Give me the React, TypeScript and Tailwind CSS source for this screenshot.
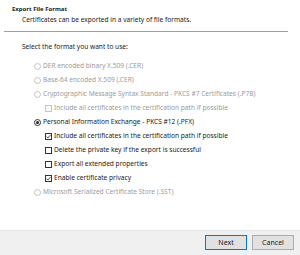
import { ReactNode } from "react";

type OptionProps = {
  label: string
  disabled?: boolean
  checked?: boolean
}

function Radio({ label, disabled, checked }: OptionProps) {
  return (
    <div className="h-[14px] flex items-center pl-[34px]">
      <span
        className={`w-[7px] h-[7px] rounded-full border flex items-center justify-center bg-white ${
          disabled ? "border-[#c4c4c4]" : "border-[#333333]"
        }`}
      >
        {checked && <span className="w-[3px] h-[3px] rounded-full bg-[#222222]" />}
      </span>
      <span className={`ml-[2px] ${disabled ? "text-[#9b9b9b]" : "text-[#1a1a1a]"}`}>{label}</span>
    </div>
  )
}

function Check({ label, disabled, checked }: OptionProps) {
  return (
    <div className="h-[14px] flex items-center pl-[45px]">
      <span
        className={`w-[7px] h-[7px] border flex items-center justify-center bg-white ${
          disabled ? "border-[#c4c4c4]" : "border-[#333333]"
        }`}
      >
        {checked && (
          <svg width="5" height="5" viewBox="0 0 5 5" className="block">
            <path d="M0.5 2.6 L1.9 4 L4.6 0.9" fill="none" stroke="#222" strokeWidth="0.8" />
          </svg>
        )}
      </span>
      <span className={`ml-[2px] ${disabled ? "text-[#9b9b9b]" : "text-[#1a1a1a]"}`}>{label}</span>
    </div>
  )
}

function Button({ children, primary }: { children: ReactNode; primary?: boolean }) {
  return (
    <button
      className={`w-[42px] h-[15px] flex items-center justify-center bg-[#e1e1e1] border text-[7px] text-[#1a1a1a] ${
        primary ? "border-[#0078d7]" : "border-[#adadad]"
      }`}
    >
      {children}
    </button>
  )
}

export default function App() {
  return (
    <main
      className="w-[300px] h-[255px] bg-white flex flex-col text-[6.6px] leading-none overflow-hidden"
      style={{ fontFamily: '"Noto Sans", "Liberation Sans", sans-serif' }}
    >
      {/* header */}
      <div className="pt-[5px]">
        <div className="h-[8px] flex items-center pl-[12px] font-bold text-[6px] text-[#1a1a1a]">Export File Format</div>
        <div className="h-[10px] mt-[2px] flex items-center pl-[22px] text-[#1a1a1a]">
          Certificates can be exported in a variety of file formats.
        </div>
      </div>

      <div className="mt-[6px] ml-[4px] mr-[12px] h-px bg-[#a0a0a0]" />

      {/* body */}
      <div className="flex-1 flex flex-col">
        <div className="mt-[10px] h-[10px] flex items-center pl-[22px] text-[#1a1a1a]">
          Select the format you want to use:
        </div>

        <div className="mt-[7px] flex flex-col">
          <Radio label="DER encoded binary X.509 (.CER)" disabled />
          <Radio label="Base-64 encoded X.509 (.CER)" disabled />
          <Radio label="Cryptographic Message Syntax Standard - PKCS #7 Certificates (.P7B)" disabled />
          <Check label="Include all certificates in the certification path if possible" disabled />
          <Radio label="Personal Information Exchange - PKCS #12 (.PFX)" checked />
          <Check label="Include all certificates in the certification path if possible" checked />
          <Check label="Delete the private key if the export is successful" />
          <Check label="Export all extended properties" />
          <Check label="Enable certificate privacy" checked />
          <Radio label="Microsoft Serialized Certificate Store (.SST)" disabled />
        </div>
      </div>

      {/* footer */}
      <div className="h-[25px] bg-[#f0f0f0] border-t border-[#e3e3e3] flex items-start justify-end gap-[5px] pt-[4px] pr-[6px]">
        <Button primary>Next</Button>
        <Button>Cancel</Button>
      </div>
    </main>
  )
}
